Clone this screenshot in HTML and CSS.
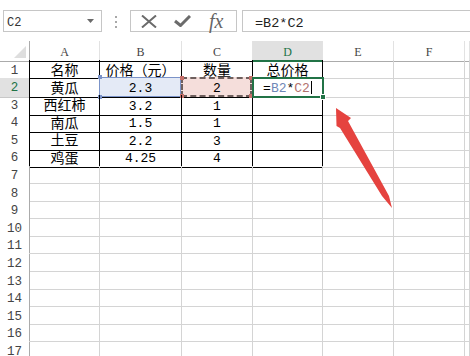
FILE: index.html
```html
<!DOCTYPE html>
<html lang="zh">
<head>
<meta charset="utf-8">
<link rel="stylesheet" href="styles.css">
</head>
<body>
<div class="toolbar">
  <div class="namebox"><span>C2</span><svg class="caret" viewBox="0 0 7 4"><path d="M0 0H7L3.5 4Z" fill="#6a6a6a"/></svg></div>
  <div class="grip"><i></i><i></i><i></i></div>
  <div class="fbtns">
    <svg class="ico-x" viewBox="0 0 16 13"><path d="M1 0.5L15 12.5M15 0.5L1 12.5" stroke="#6b6b6b" stroke-width="2" fill="none"/></svg>
    <svg class="ico-ok" viewBox="0 0 17 12"><path d="M1 6L6.5 10.5L16 1" stroke="#6b6b6b" stroke-width="3" fill="none"/></svg>
    <span class="fx">fx</span>
  </div>
  <div class="finput">=B2*C2</div>
</div>
<div class="sheet">
  <div class="row hdr">
    <div class="corner"><svg viewBox="0 0 12 12"><path d="M12 0V12H0Z" fill="#dedede"/></svg></div>
    <div class="ch tb">A</div><div class="ch tb">B</div><div class="ch tb">C</div><div class="ch act">D</div><div class="ch">E</div><div class="ch">F</div><div class="ch"></div>
  </div>
  <div class="row">
    <div class="rh tb">1</div>
    <div class="t tl zh">名称</div><div class="t zh">价格（元）</div><div class="t zh">数量</div><div class="t zh">总价格</div><div></div><div></div><div></div>
  </div>
  <div class="row">
    <div class="rh tb sel">2</div>
    <div class="t tl zh">黄瓜</div>
    <div class="t num fillb"><span class="refb"><i class="h hb tl"></i><i class="h hb bl"></i></span><span class="txt">2.3</span></div>
    <div class="t num fillc"><span class="refc"><i class="h hc tl"></i><i class="h hc bl"></i><i class="h hc tr"></i><i class="h hc br"></i></span><span class="txt">2</span></div>
    <div class="t num"><span class="refd"><i class="hd"></i></span><span class="txt">=<b class="cb">B2</b>*<b class="cc">C2</b><i class="cursor"></i></span></div>
    <div></div><div></div><div></div>
  </div>
  <div class="row">
    <div class="rh tb">3</div>
    <div class="t tl zh">西红柿</div><div class="t num">3.2</div><div class="t num">1</div><div class="t"></div><div></div><div></div><div></div>
  </div>
  <div class="row">
    <div class="rh tb">4</div>
    <div class="t tl zh">南瓜</div><div class="t num">1.5</div><div class="t num">1</div><div class="t"></div><div></div><div></div><div></div>
  </div>
  <div class="row">
    <div class="rh tb">5</div>
    <div class="t tl zh">土豆</div><div class="t num">2.2</div><div class="t num">3</div><div class="t"></div><div></div><div></div><div></div>
  </div>
  <div class="row">
    <div class="rh tb">6</div>
    <div class="t tl zh">鸡蛋</div><div class="t num">4.25</div><div class="t num">4</div><div class="t"></div><div></div><div></div><div></div>
  </div>
  <div class="row"><div class="rh">7</div><div></div><div></div><div></div><div></div><div></div><div></div><div></div></div>
  <div class="row"><div class="rh">8</div><div></div><div></div><div></div><div></div><div></div><div></div><div></div></div>
  <div class="row"><div class="rh">9</div><div></div><div></div><div></div><div></div><div></div><div></div><div></div></div>
  <div class="row"><div class="rh">10</div><div></div><div></div><div></div><div></div><div></div><div></div><div></div></div>
  <div class="row"><div class="rh">11</div><div></div><div></div><div></div><div></div><div></div><div></div><div></div></div>
  <div class="row"><div class="rh">12</div><div></div><div></div><div></div><div></div><div></div><div></div><div></div></div>
  <div class="row"><div class="rh">13</div><div></div><div></div><div></div><div></div><div></div><div></div><div></div></div>
  <div class="row"><div class="rh">14</div><div></div><div></div><div></div><div></div><div></div><div></div><div></div></div>
  <div class="row"><div class="rh">15</div><div></div><div></div><div></div><div></div><div></div><div></div><div></div></div>
  <div class="row"><div class="rh">16</div><div></div><div></div><div></div><div></div><div></div><div></div><div></div></div>
  <div class="row"><div class="rh">17</div><div></div><div></div><div></div><div></div><div></div><div></div><div></div></div>
</div>
<svg class="arrow" viewBox="0 0 470 356"><polygon points="336,108 351,118 348,121 389,196 392,208 382,196 340,128 336.5,126" fill="#e5433f"/></svg>
</body>
</html>
```

FILE: styles.css
```css
* { box-sizing: border-box; margin: 0; padding: 0; }
html, body { width: 470px; height: 356px; overflow: hidden; background: #fff; }
body { position: relative; font-family: "Noto Sans CJK SC", sans-serif; color: #000; }

.toolbar { display: flex; align-items: flex-start; height: 41px; padding: 10px 0 0 3px; }
.namebox { width: 99px; height: 22px; border: 1px solid #c6c6c6; display: flex; align-items: center; justify-content: space-between; padding: 3px 7px 0 3px; font: 12px "Liberation Mono", monospace; color: #333; }
.caret { width: 7px; height: 4px; margin-top: -3px; }
.grip { display: flex; flex-direction: column; gap: 3px; margin: 6px 0 0 13px; }
.grip i { display: block; width: 2px; height: 2px; background: #a8a8a8; }
.fbtns { margin-left: 13px; width: 107px; height: 22px; border: 1px solid #c6c6c6; display: flex; align-items: center; padding-left: 10px; }
.ico-x { width: 16px; height: 13px; }
.ico-ok { width: 17px; height: 12px; margin-left: 17px; }
.fx { margin-left: 18px; font: italic 20px "Liberation Serif", serif; color: #666; line-height: 20px; }
.finput { margin-left: 5px; flex: 1; height: 22px; border: 1px solid #c6c6c6; border-right: none; padding: 4px 0 0 12px; display: flex; align-items: center; font: 13.5px "Liberation Mono", monospace; color: #222; }

.row { display: grid; grid-template-columns: 30px 70px 82px 71px 70px 71px 71px 1fr; height: 17.6px; }
.row > div { position: relative; border-right: 1px solid #d4d4d4; border-bottom: 1px solid #d4d4d4; text-align: center; white-space: nowrap; line-height: 16px; }
.hdr { height: 19px; }
.hdr > div { border-right-color: #e2e2e2; border-bottom-color: #ababab; font: 12px "Liberation Serif", serif; color: #444; padding-top: 4px; }
.hdr > .tb { border-bottom-color: #000; }
.hdr > .act { background: #e1e1e1; color: #217346; border-bottom: 2px solid #217346; }
.hdr > .corner { border-right-color: #ababab; display: flex; justify-content: flex-end; align-items: flex-end; padding: 0 3px 3px 0; }
.corner svg { width: 12px; height: 12px; }

.row > .rh { border-bottom-color: transparent; border-right-color: #ababab; font: 12.5px "Liberation Mono", monospace; color: #444; padding-top: 3.5px; }
.row > .rh.tb { border-right-color: #000; }
.row > .rh.sel { background: #e1e1e1; color: #217346; border-bottom-color: #c8c8c8; }

.row > .t { border-right-color: #000; border-bottom-color: #000; }
.zh { font-size: 14px; padding-top: 1px; }
.num { font: 13px "Liberation Mono", monospace; padding-top: 3.5px; }

.txt { position: relative; z-index: 1; }
.fillb { background: #e4eaf6; }
.refb { position: absolute; top: -1px; left: -1px; right: 0; bottom: 0; border: 1px solid #7b93c8; }
.refc { position: absolute; top: -1px; left: -1px; right: 0; bottom: 0; border: 2px dashed #6e5f5d; background: #f5dedb; }
.refd { position: absolute; top: -1px; left: -1px; right: -2px; bottom: -1px; border: 2px solid #217346; z-index: 2; }
.h { position: absolute; width: 4px; height: 4px; }
.hb { background: #7b93c8; }
.hc { background: #c66f6a; }
.refb .tl { top: -2.5px; left: -2.5px; }
.refb .bl { bottom: -2.5px; left: -2.5px; }
.refc .tl { top: -3px; left: -3px; }
.refc .bl { bottom: -3px; left: -3px; }
.refc .tr { top: -3px; right: -3px; }
.refc .br { bottom: -3px; right: -3px; }
.hd { position: absolute; right: -4px; bottom: -4px; width: 6px; height: 6px; background: #217346; border: 1px solid #fff; }
.cb { font-weight: normal; color: #6f87b6; }
.cc { font-weight: normal; color: #b2726e; }
.cursor { display: inline-block; width: 1px; height: 13px; background: #000; margin-left: 1px; vertical-align: -2px; }

.arrow { position: absolute; left: 0; top: 0; width: 470px; height: 356px; pointer-events: none; }
```
